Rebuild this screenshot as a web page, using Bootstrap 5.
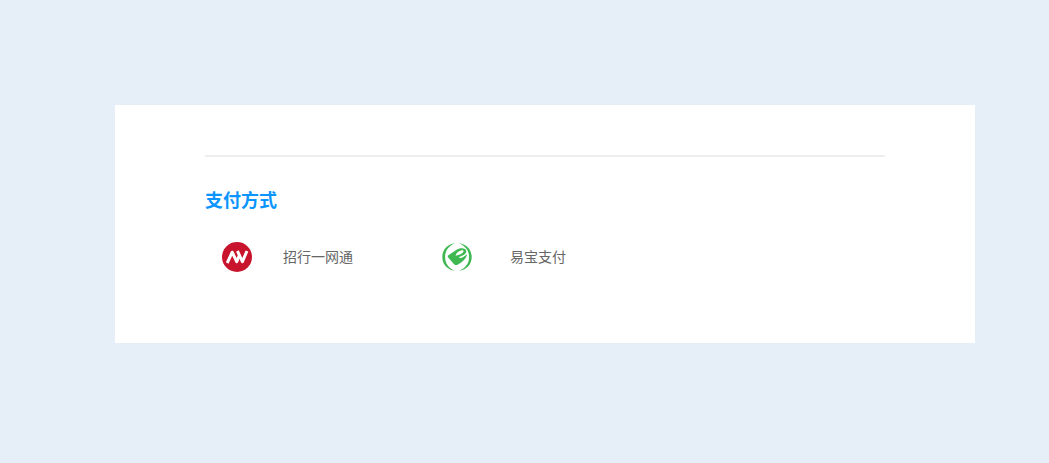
<!DOCTYPE html>
<html lang="zh-CN">
<head>
  <meta charset="UTF-8" />
  <meta name="viewport" content="width=device-width, initial-scale=1" />
  <title>支付方式</title>
  <link href="https://cdn.jsdelivr.net/npm/bootstrap@5.3.2/dist/css/bootstrap.min.css" rel="stylesheet" />
  <style>
    body {
      background: #e6eef8;
      font-family: "Liberation Sans", "Noto Sans CJK SC", sans-serif;
      font-size: 14px;
      color: #666;
    }
    .pay-panel {
      width: 860px;
      height: 238px;
      margin: 105px 0 0 115px;
      padding: 50px 90px 0;
    }
    .pay-line {
      height: 2px;
      background: #eee;
    }
    .pay-title {
      margin: 32px 0 0;
      font-size: 18px;
      line-height: 24px;
      color: #0c95ff;
    }
    .pay-list {
      margin-top: 29px;
      padding-left: 17px;
    }
    .pay-item {
      width: 220px;
      height: 30px;
    }
    .pay-name {
      margin-left: 31px;
      line-height: 30px;
    }
    .pay-name-wide {
      margin-left: 38px;
    }
  </style>
</head>
<body>
  <div class="pay-panel bg-white">
    <div class="pay-line"></div>
    <h2 class="pay-title fw-bold">支付方式</h2>
    <div class="pay-list d-flex">
      <div class="pay-item d-flex align-items-center">
        <svg class="flex-shrink-0" width="30" height="30" viewBox="0 0 30 30">
          <circle cx="15" cy="15" r="15" fill="#c8152d" />
          <g fill="none" stroke="#fff" stroke-width="3" stroke-linejoin="round">
            <path d="M5.2 21 L10.2 10.2 L14.7 19.6 L17.4 13.4" />
            <path d="M15.4 9 L20.4 19.6 L25 9" />
          </g>
        </svg>
        <span class="pay-name">招行一网通</span>
      </div>
      <div class="pay-item d-flex align-items-center">
        <svg class="flex-shrink-0" width="30" height="30" viewBox="0 0 30 30">
          <g fill="#3fb851">
            <path d="M13 1.2 C5 2.2 .3 8 .3 15 C.3 22 5 27.8 13 28.8 C6.5 26 3.1 21.5 3.1 15 C3.1 8.5 6.5 4 13 1.2Z" />
            <path d="M17 1.2 C25 2.2 29.7 8 29.7 15 C29.7 22 25 27.8 17 28.8 C23.5 26 27.1 21.5 27.1 15 C27.1 8.5 23.5 4 17 1.2Z" />
            <path d="M6.4 13.2 L15 7.6 C18.5 5.5 23.8 5.8 24.3 8.8 C24.6 11.8 20.8 13.6 16.8 15.1 C17.8 17 21.2 15.6 25 12.2 C24.8 15.8 20.3 20.3 16 22.4 C14 23.4 12.6 23.1 11.4 21.5 L6.2 15.4 C5.6 14.5 5.6 13.7 6.4 13.2Z" />
          </g>
          <path d="M13.6 13.7 C14.4 10.3 18 7.9 21.2 8.2 C22.6 10.5 18.3 12.6 13.6 13.7Z" fill="#fff" />
        </svg>
        <span class="pay-name pay-name-wide">易宝支付</span>
      </div>
    </div>
  </div>
  <script src="https://cdn.jsdelivr.net/npm/bootstrap@5.3.2/dist/js/bootstrap.bundle.min.js"></script>
</body>
</html>
